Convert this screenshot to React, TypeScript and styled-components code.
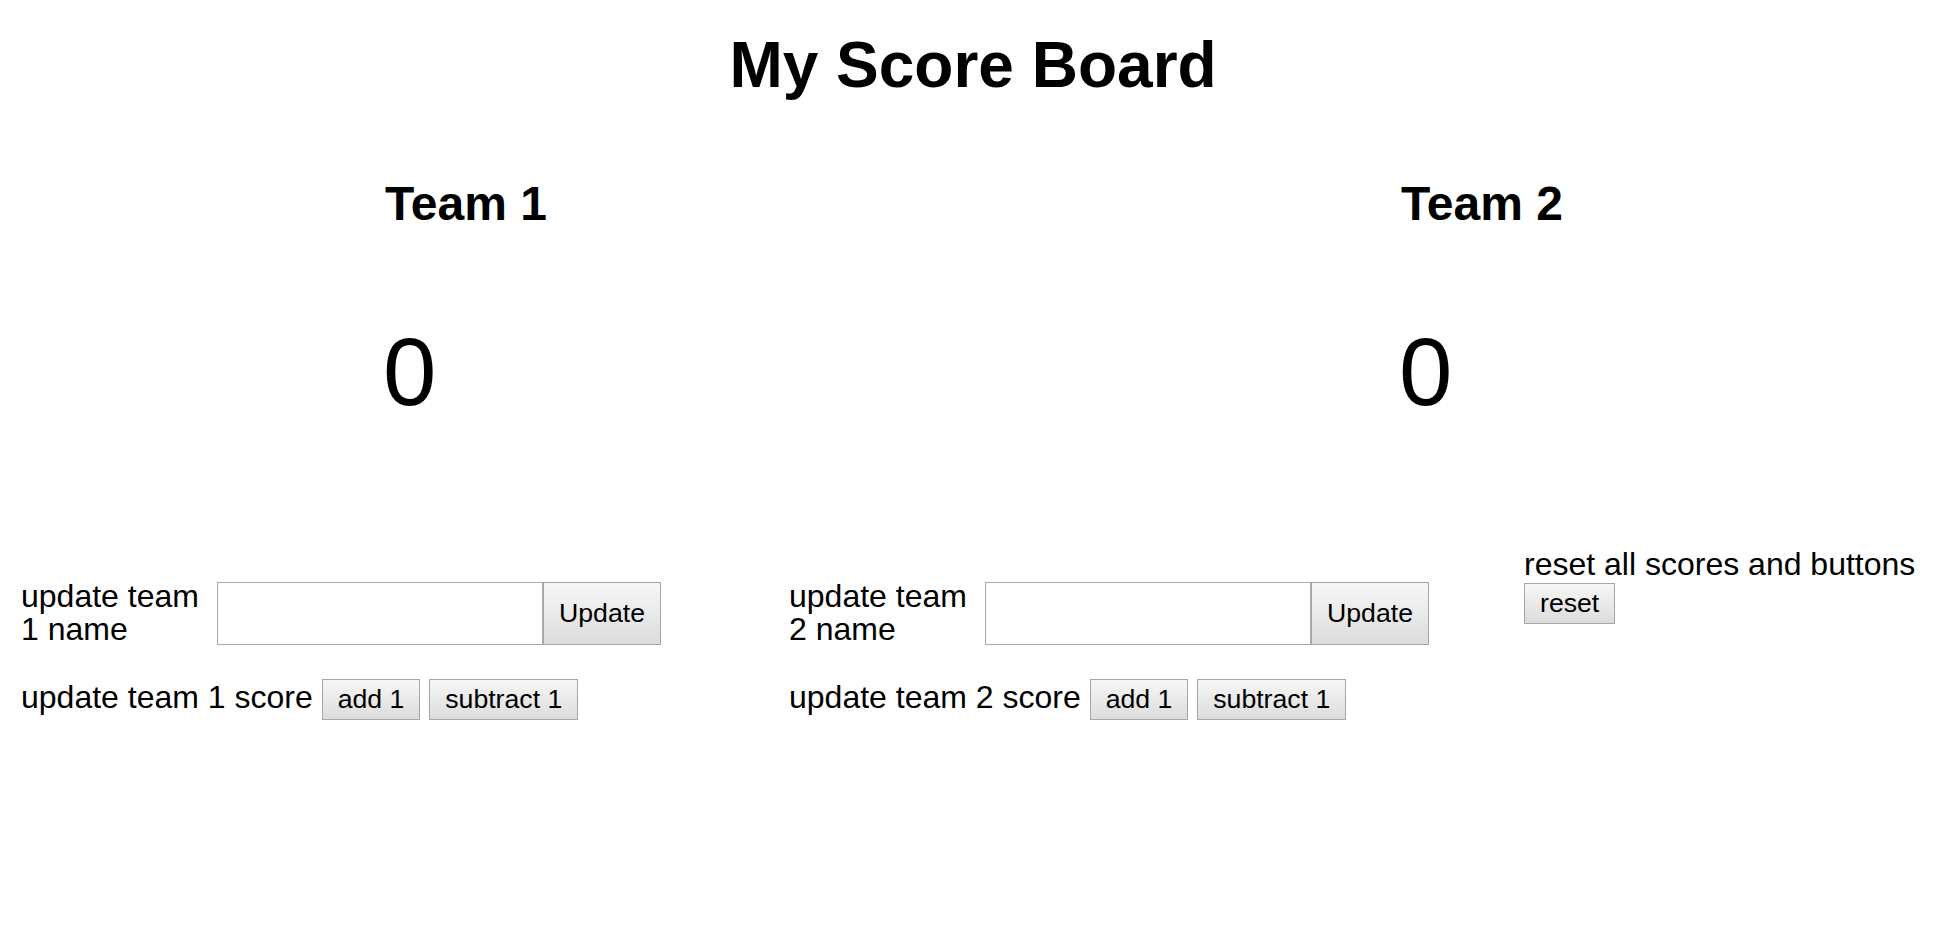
import styled, { createGlobalStyle } from 'styled-components';

const GlobalStyle = createGlobalStyle`
  body {
    margin: 0;
    background: #ffffff;
    color: #000000;
    font-family: "Liberation Sans", Arial, sans-serif;
  }
`;

const Page = styled.div`
  display: flex;
  flex-direction: column;
`;

const Title = styled.h1`
  margin: 28px 0 0;
  padding-left: 10px;
  font-size: 64px;
  font-weight: 700;
  line-height: normal;
  text-align: center;
`;

const Teams = styled.div`
  display: grid;
  grid-template-columns: 1016px auto;
  margin-top: 74px;
  padding-left: 385px;
`;

const TeamCard = styled.div`
  display: flex;
  flex-direction: column;
  align-items: flex-start;
`;

const TeamName = styled.h2`
  margin: 0;
  font-size: 48px;
  font-weight: 700;
  line-height: normal;
`;

const Score = styled.div`
  margin-top: 86px;
  margin-left: -2px;
  font-size: 96px;
  line-height: normal;
`;

const Controls = styled.div`
  display: grid;
  grid-template-columns: 768px 735px auto;
  align-items: start;
  margin-top: 119px;
  padding-left: 21px;
`;

const TeamControls = styled.div`
  display: flex;
  flex-direction: column;
  padding-top: 34px;
`;

const NameRow = styled.div`
  display: flex;
  align-items: center;
`;

const Label = styled.span<{ $width?: number }>`
  font-size: 32px;
  line-height: 33px;
  ${(p) => (p.$width ? `width: ${p.$width}px; margin-right: 16px;` : '')}
`;

const NameInput = styled.input`
  box-sizing: border-box;
  width: 326px;
  height: 63px;
  margin: 0;
  border: 1px solid #a9a9a9;
  background: #ffffff;
  font-family: inherit;
  font-size: 26px;
`;

const Button = styled.button<{ $tall?: boolean }>`
  box-sizing: border-box;
  margin: 0;
  padding: ${(p) => (p.$tall ? '0 15px' : '4px 15px')};
  height: ${(p) => (p.$tall ? '63px' : 'auto')};
  border: 1px solid #a6a6a6;
  border-radius: 0;
  background: linear-gradient(#f7f7f7, #dcdcdc);
  color: #000000;
  font-family: "Liberation Sans", Arial, sans-serif;
  font-size: 26.67px;
  line-height: normal;
  vertical-align: baseline;
`;

const ScoreRow = styled.div`
  margin-top: 33px;
  font-size: 32px;
  line-height: normal;
`;

const ResetBox = styled.div`
  display: flex;
  flex-direction: column;
  align-items: flex-start;
  font-size: 32px;
  line-height: normal;
`;

const TeamControl = ({ n }: { n: number }) => (
  <TeamControls>
    <NameRow>
      <Label $width={180}>update team {n} name</Label>
      <NameInput type="text" />
      <Button $tall>Update</Button>
    </NameRow>
    <ScoreRow>
      update team {n} score <Button>add 1</Button> <Button>subtract 1</Button>
    </ScoreRow>
  </TeamControls>
);

const App = () => (
  <Page>
    <GlobalStyle />
    <Title>My Score Board</Title>
    <Teams>
      <TeamCard>
        <TeamName>Team 1</TeamName>
        <Score>0</Score>
      </TeamCard>
      <TeamCard>
        <TeamName>Team 2</TeamName>
        <Score>0</Score>
      </TeamCard>
    </Teams>
    <Controls>
      <TeamControl n={1} />
      <TeamControl n={2} />
      <ResetBox>
        <span>reset all scores and buttons</span>
        <Button>reset</Button>
      </ResetBox>
    </Controls>
  </Page>
);

export default App;
